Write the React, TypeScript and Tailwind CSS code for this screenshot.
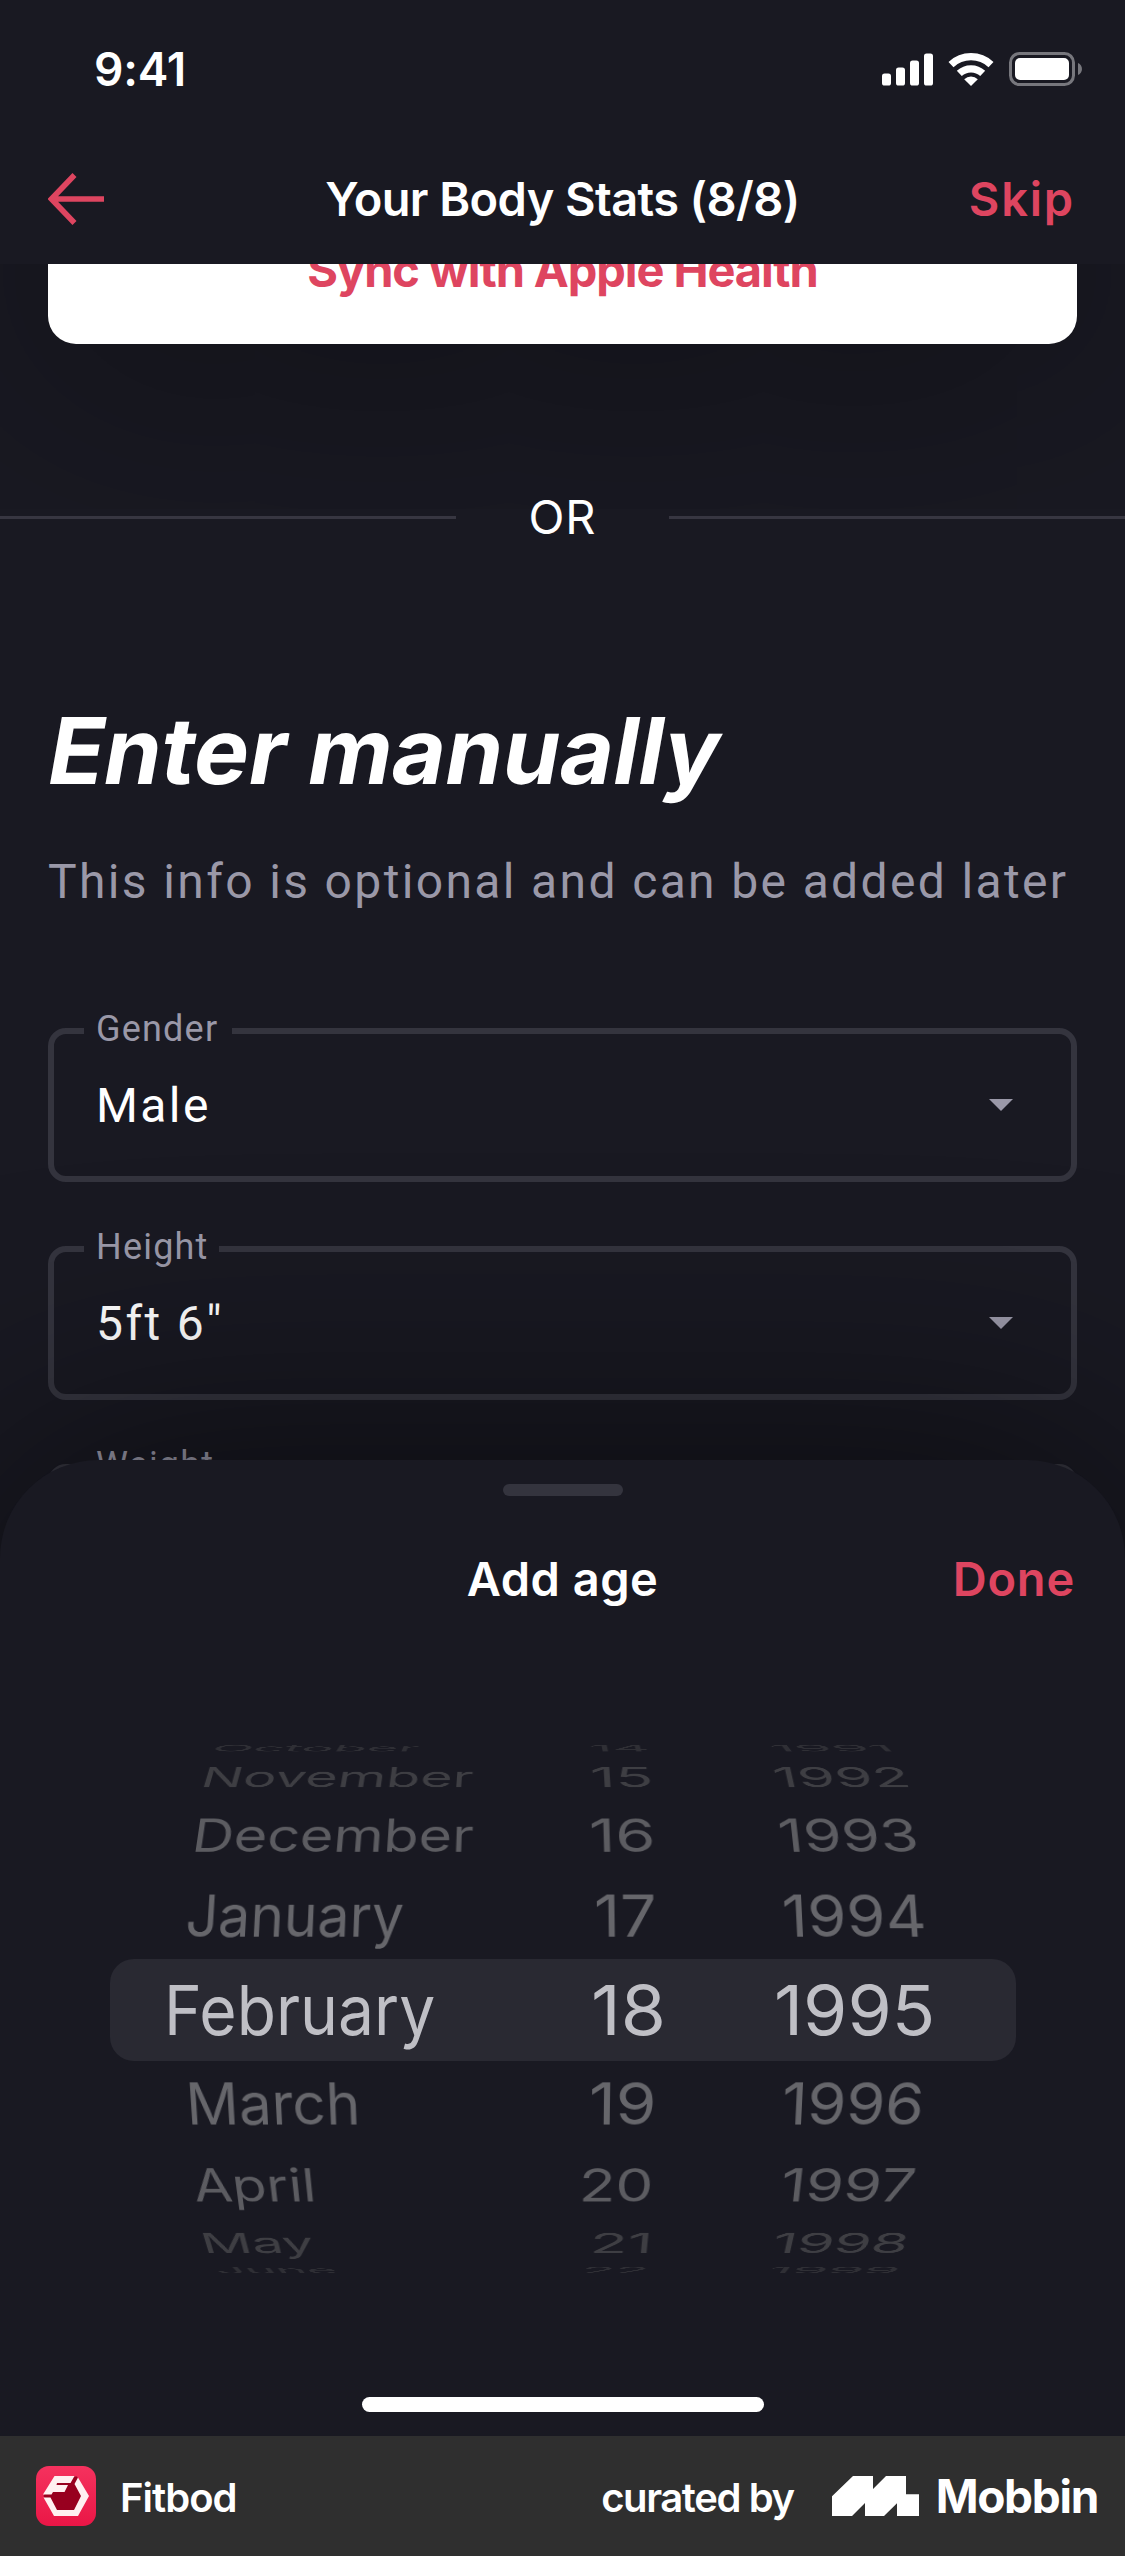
type WheelItem = { text: string; left: number; width: number; natural: number; bearing: number };
type WheelRow = { height: string; color: string; angle: number; scaleY: number; items: WheelItem[] };

const item = (text: string, left: number, width: number, natural: number, bearing: number): WheelItem => ({
  text,
  left,
  width,
  natural,
  bearing,
});

const rows: WheelRow[] = [
  { height: "h-[20px]", color: "text-[#2f2f35]", angle: 81, scaleY: 0.86, items: [item("October", 217, 202, 258.9, 4), item("14", 592, 55, 66.1, 3), item("1991", 773, 115, 132.6, 3)] },
  { height: "h-[38px]", color: "text-[#3e3e43]", angle: 61, scaleY: 0.84, items: [item("November", 207, 266, 331.6, 6), item("15", 593, 57, 63.1, 3), item("1992", 776, 130, 148.6, 3)] },
  { height: "h-[77px]", color: "text-[#5c5c61]", angle: 41, scaleY: 0.87, items: [item("December", 198, 275, 331.6, 6), item("16", 592, 60, 64.1, 3), item("1993", 781, 134, 149.6, 3)] },
  { height: "h-[86px]", color: "text-[#66666b]", angle: 20.5, scaleY: 0.89, items: [item("January", 189, 214, 259.5, 3), item("17", 597, 57, 61.1, 3), item("1994", 785, 138, 151.6, 3)] },
  { height: "h-[102px]", color: "text-[#bfbfc5]", angle: 0, scaleY: 1, items: [item("February", 170, 264, 284.1, 6), item("18", 595, 68, 64.1, 3), item("1995", 778, 154, 148.6, 3)] },
  { height: "h-[86px]", color: "text-[#66666b]", angle: -20.5, scaleY: 0.89, items: [item("March", 192, 165, 195.3, 6), item("19", 592, 61, 64.1, 3), item("1996", 785, 136, 149.6, 3)] },
  { height: "h-[75px]", color: "text-[#5c5c61]", angle: -41, scaleY: 0.87, items: [item("April", 194, 118, 144.6, 1), item("20", 584, 67, 77.1, 5), item("1997", 784, 129, 145.3, 3)] },
  { height: "h-[41px]", color: "text-[#3e3e43]", angle: -61, scaleY: 0.84, items: [item("May", 206, 106, 131.1, 6), item("21", 595, 53, 59.1, 5), item("1998", 776, 130, 149.6, 3)] },
  { height: "h-[14px]", color: "text-[#2f2f35]", angle: -81, scaleY: 0.86, items: [item("June", 218, 117, 155, 3), item("22", 586, 60, 75.1, 5), item("1999", 772, 125, 149.6, 3)] },
];

const columnStarts = [110, 560, 740];
const vanishingX = 540;

function Wheel() {
  return (
    <div className="mx-[110px] flex w-[906px] flex-col">
      {rows.map((row, i) => (
        <div
          key={i}
          className={`grid shrink-0 grid-cols-[450px_180px_276px] items-center ${row.height} ${row.color} ${row.angle === 0 ? "rounded-3xl bg-[#292932]" : ""}`}
        >
          {row.items.map((it, c) => {
            const sx = it.width / it.natural;
            const start = it.left - it.bearing * sx;
            return (
              <div key={c} className="flex h-0 items-center" style={{ paddingLeft: start - columnStarts[c] }}>
                <span
                  className="block whitespace-nowrap"
                  style={{
                    transform: `perspective(2000px) rotateX(${row.angle}deg)`,
                    transformOrigin: `${vanishingX - start}px 50%`,
                  }}
                >
                  <span
                    className="block origin-left text-[69px] leading-[84px]"
                    style={{ transform: `scale(${sx}, ${row.scaleY})` }}
                  >
                    {it.text}
                  </span>
                </span>
              </div>
            );
          })}
        </div>
      ))}
    </div>
  );
}

function StatusBar() {
  return (
    <div className="flex h-[138px] items-center justify-between pl-[94px] pr-[43px]">
      <span className="text-[46px] font-semibold leading-none tracking-[-0.2px]">9:41</span>
      <div className="flex items-center">
        <svg className="h-[33px] w-[51px]" viewBox="0 0 51 33" fill="white">
          <rect x="0" y="20.5" width="9" height="12" rx="2.6" />
          <rect x="14" y="14.5" width="9" height="18" rx="2.6" />
          <rect x="28" y="7.5" width="9" height="25" rx="2.6" />
          <rect x="42" y="0.5" width="9" height="32" rx="2.6" />
        </svg>
        <svg className="ml-[15px] h-[33px] w-[46px]" viewBox="0 0 46 33" fill="none" stroke="white" strokeWidth="7.3">
          <path d="M3 11.6A29.3 29.3 0 0 1 43 11.6" />
          <path d="M11.3 20.4A17.2 17.2 0 0 1 34.7 20.4" />
          <path d="M23 33L16.2 26.2A10 10 0 0 1 29.8 26.2Z" fill="white" stroke="none" />
        </svg>
        <svg className="ml-[15px] h-[34px] w-[73px]" viewBox="0 0 73 34" fill="none">
          <rect x="1.5" y="1.5" width="63" height="31" rx="9" stroke="#77777d" strokeWidth="3" />
          <rect x="6" y="6" width="54" height="22" rx="5" fill="white" />
          <path d="M69 11C74.3 13.2 74.3 20.8 69 23Z" fill="#77777d" />
        </svg>
      </div>
    </div>
  );
}

function Field({ label, value, gap }: { label: string; value: string; gap: string }) {
  return (
    <div className="relative flex h-[154px] shrink-0 items-center justify-between rounded-[18px] border-[6px] border-[#34343e] pl-[42px] pr-[58px]">
      <span
        className={`absolute -top-[29px] left-[30px] bg-[#191922] pl-[12px] font-[Roboto] text-[36px] leading-[48px] tracking-[1.2px] text-[#9a98a8] ${gap}`}
      >
        {label}
      </span>
      <span className="pt-[2px] font-[Roboto] text-[48px] leading-[56px] tracking-[2.4px]">{value}</span>
      <svg className="h-3 w-6" viewBox="0 0 24 12" fill="#9a98a8">
        <path d="M0 0H24L12 12Z" />
      </svg>
    </div>
  );
}

export default function App() {
  return (
    <div className="relative flex h-[2556px] w-[1125px] flex-col overflow-hidden bg-[#191922] font-[Inter,sans-serif] text-white">
      <header className="z-20 h-[264px] shrink-0 bg-[#191922]">
        <StatusBar />
        <div className="grid h-[121px] grid-cols-[1fr_auto_1fr] items-center px-[48px]">
          <svg className="h-[52px] w-[56px]" viewBox="0 0 56 52" fill="none" stroke="#de4560" strokeWidth="5.6">
            <path d="M26.5 2L3.5 26L26.5 50M3.5 26H56" />
          </svg>
          <h1 className="text-[47px] font-semibold leading-none tracking-[-0.6px]">Your Body Stats (8/8)</h1>
          <button className="pr-[2px] text-right text-[47px] font-semibold leading-none tracking-[1.8px] text-[#de4560]">Skip</button>
        </div>
      </header>

      <main className="flex flex-col">
        <button className="mx-[48px] -mt-[70px] flex h-[150px] shrink-0 items-center justify-center rounded-[28px] bg-white text-[47px] font-bold leading-none tracking-[-1.1px] text-[#de4560] shadow-[0_0_300px_rgba(0,0,0,0.5)]">
          Sync with Apple Health
        </button>

        <div className="mt-[144px] flex h-[59px] items-center justify-between">
          <span className="h-[3px] w-[456px] bg-[#373641]" />
          <span className="pb-[2px] text-[47px] leading-none tracking-[1px]">OR</span>
          <span className="h-[3px] w-[456px] bg-[#373641]" />
        </div>

        <section className="flex flex-col px-[48px]">
          <h2 className="mt-[148px] origin-bottom-left translate-x-[-8px] -skew-x-[10deg] text-[92px] font-bold leading-[111px] tracking-[0px]">
            Enter manually
          </h2>
          <p className="mt-[46px] whitespace-nowrap font-[Roboto] text-[48px] leading-[60px] tracking-[2.36px] text-[#9a98a8]">
            This info is optional and can be added later
          </p>
          <div className="mt-[116px] flex flex-col gap-[64px]">
            <Field label="Gender" value="Male" gap="w-[148px]" />
            <Field label="Height" value={'5ft 6"'} gap="w-[135px]" />
            <Field label="Weight" value="" gap="w-[142px]" />
          </div>
        </section>
      </main>

      <div className="absolute inset-x-0 top-[1460px] z-10 flex h-[976px] flex-col items-center rounded-t-[98px] bg-[#191922] pt-6 shadow-[0_0_270px_rgba(0,0,0,0.62)]">
        <span className="h-3 w-[120px] shrink-0 rounded-full bg-[#34343e]" />
        <div className="mt-[52px] grid h-[60px] w-full shrink-0 grid-cols-[1fr_auto_1fr] items-center px-[50px]">
          <span />
          <h3 className="text-[47px] font-semibold leading-none tracking-[0.5px]">Add age</h3>
          <button className="text-right text-[47px] font-semibold leading-none tracking-[0.8px] text-[#de4560]">Done</button>
        </div>
        <div className="mt-[130px]">
          <Wheel />
        </div>
        <span className="mt-[120px] h-[15px] w-[402px] shrink-0 rounded-full bg-white" />
      </div>

      <footer className="absolute inset-x-0 bottom-0 z-20 flex h-[120px] items-center bg-[#2f2f2f] pl-9 pr-[27px]">
        <svg className="size-[60px]" viewBox="0 0 60 60">
          <defs>
            <linearGradient id="tile" x1="0" y1="0" x2="0" y2="1">
              <stop offset="0" stopColor="#f5325e" />
              <stop offset="1" stopColor="#ea1646" />
            </linearGradient>
          </defs>
          <rect width="60" height="60" rx="13" fill="url(#tile)" />
          <path d="M19 10.5H41L52 30L42 49H18L7.5 30Z" fill="#98001f" />
          <path d="M7 28.5L18.5 10H38.5L34.5 17H21L20.5 19H32L28.5 26H17L15.5 28.5Z" fill="#fff0f1" />
          <path d="M42 11.5L53 30L42 50H18L7.5 31.5H14.5L21 44H38L45 30L38.5 18Z" fill="#fff0f1" />
        </svg>
        <span className="ml-[24px] pt-[3px] text-[40px] font-semibold leading-none tracking-[-1px]">Fitbod</span>
        <span className="ml-auto pt-[3px] text-[40px] font-semibold leading-none tracking-[-1.4px]">curated by</span>
        <svg className="ml-[38px] h-[40px] w-[87px]" viewBox="0 0 87 40" fill="white">
          <path d="M0 20.3L21 0H41V13L54 0H74V18.3H87V40H65V27.3L52 40H33V27L20 40H0Z" />
        </svg>
        <span className="ml-[17px] text-[46px] font-bold leading-none tracking-[-1.3px]">Mobbin</span>
      </footer>
    </div>
  );
}
